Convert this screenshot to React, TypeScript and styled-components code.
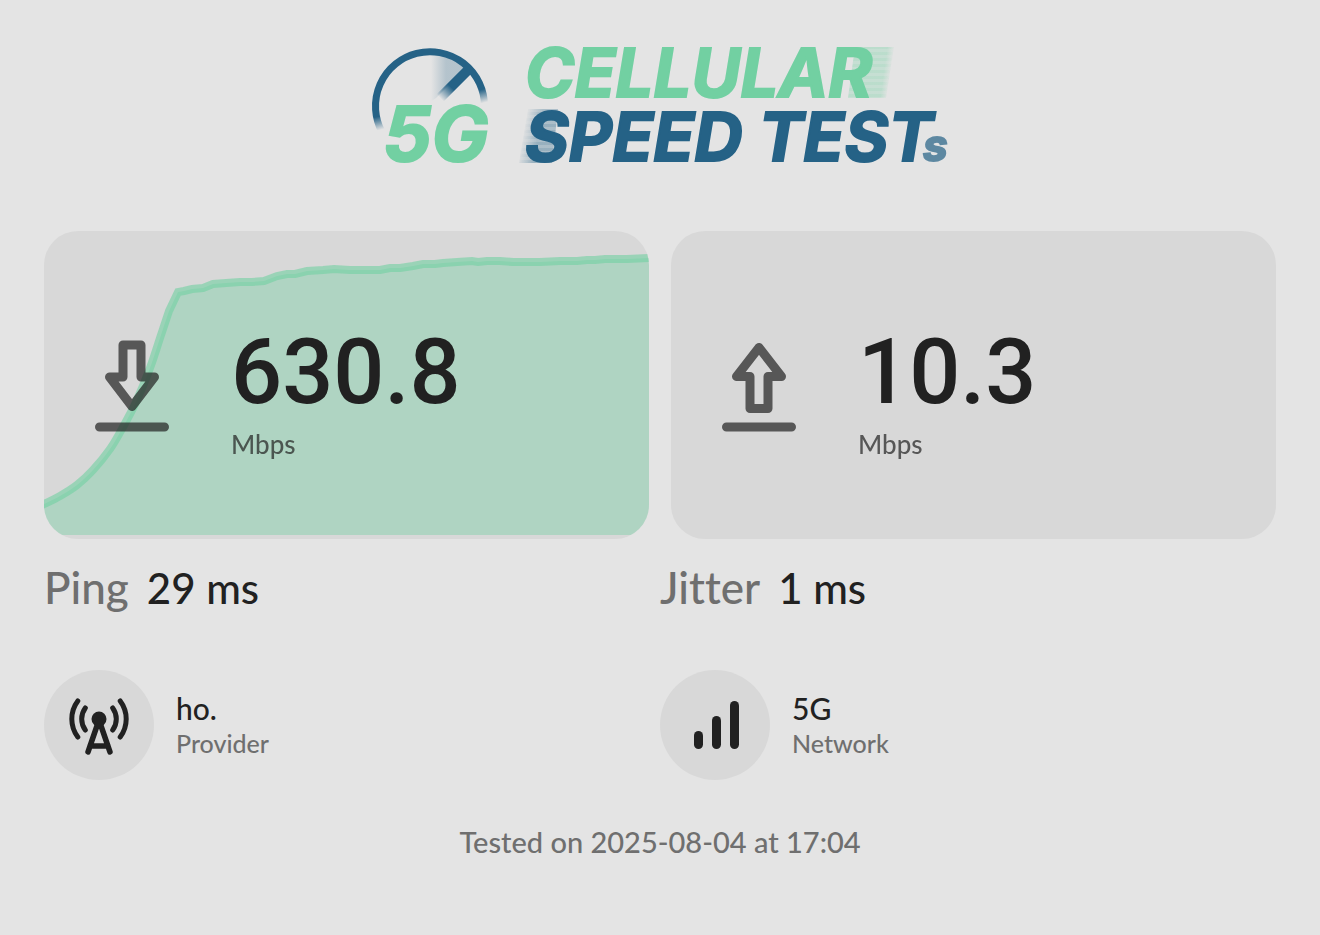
import React from 'react';
import styled, { createGlobalStyle } from 'styled-components';

const ink = '#212121';
const muted = '#6f6f6f';
const green = '#72d0a2';
const blue = '#256286';

const GlobalStyle = createGlobalStyle`
  *, *::before, *::after { box-sizing: border-box; }
  body {
    margin: 0;
    background: #e4e4e4;
    color: ${ink};
    font-family: Lato, 'Liberation Sans', sans-serif;
    font-weight: 500;
    font-variant-ligatures: none;
  }
`;

const Page = styled.main`
  display: flex;
  flex-direction: column;
  padding: 40px 44px 64px;
`;

const Header = styled.header`
  display: flex;
  justify-content: center;
  margin-bottom: 61px;
`;

const LogoSvg = styled.svg`
  display: block;
  width: 580px;
  height: 130px;
  max-width: 100%;
  overflow: visible;
`;

const LogoText = styled.text<{ $color: string }>`
  font-family: Inter, 'Liberation Sans', sans-serif;
  font-weight: 700;
  font-style: italic;
  fill: ${(p) => p.$color};
  stroke: ${(p) => p.$color};
  stroke-width: 2;
`;

const Cards = styled.section`
  display: grid;
  grid-template-columns: 1fr 1fr;
  gap: 22px;
`;

const Card = styled.article`
  position: relative;
  display: flex;
  align-items: center;
  gap: 62px;
  min-height: 308px;
  padding: 2px 51px 0;
  border-radius: 34px;
  background: #d8d8d8;
  overflow: hidden;
`;

const ChartSvg = styled.svg`
  position: absolute;
  inset: 0;
  width: 100%;
  height: 100%;
`;

const DirectionIcon = styled.svg`
  position: relative;
  flex: none;
  width: 74px;
  height: 92px;
  opacity: 0.7;
  fill: none;
  stroke: ${ink};
  stroke-width: 9;
  stroke-linecap: round;
  stroke-linejoin: round;
`;

const Reading = styled.div`
  position: relative;
  display: flex;
  flex-direction: column;
  gap: 10px;
  padding-top: 16px;
`;

const Speed = styled.span`
  font-family: Roboto, 'Liberation Sans', sans-serif;
  font-size: 90px;
  line-height: 90px;
`;

const Unit = styled.span`
  font-size: 26px;
  line-height: 32px;
  opacity: 0.7;
`;

const Columns = styled.section<{ $top: number }>`
  display: grid;
  grid-template-columns: 1fr 1fr;
  margin-top: ${(p) => p.$top}px;
`;

const Metric = styled.p`
  display: flex;
  align-items: baseline;
  gap: 18px;
  margin: 0;
  line-height: 56px;
`;

const MetricName = styled.span`
  color: ${muted};
  font-size: 44px;
`;

const MetricValue = styled.span`
  font-size: 42px;
`;

const Info = styled.div`
  display: flex;
  align-items: center;
  gap: 22px;
`;

const Badge = styled.span`
  display: grid;
  place-items: center;
  flex: none;
  width: 110px;
  height: 110px;
  border-radius: 50%;
  background: #d8d8d8;
`;

const BadgeIcon = styled.svg`
  width: 60px;
  height: 60px;
`;

const InfoText = styled.div`
  display: flex;
  flex-direction: column;
`;

const InfoValue = styled.span`
  font-size: 30px;
  line-height: 36px;
`;

const InfoLabel = styled.span`
  color: ${muted};
  font-size: 25px;
  line-height: 34px;
`;

const Tested = styled.footer`
  margin-top: 44px;
  color: ${muted};
  font-size: 29px;
  line-height: 36px;
  text-align: center;
`;

type Point = [number, number];

const rampUp: Point[] = [
  [0, 273], [16, 265], [33, 254], [49, 239], [66, 218], [79, 196], [92, 171],
  [106, 137], [117, 104], [125, 80],
];

const plateau: Point[] = [
  [134, 61], [140, 60], [148, 58], [159, 57], [169, 53], [182, 52], [196, 51],
  [208, 51], [220, 50], [233, 45], [243, 43], [251, 43], [263, 40], [279, 39],
  [290, 38], [306, 39], [336, 39], [346, 37], [356, 37], [369, 35], [379, 33],
  [391, 33], [399, 32], [413, 31], [428, 30], [434, 31], [443, 30], [456, 30],
  [469, 31], [496, 31], [516, 30], [533, 30], [543, 29], [551, 29], [561, 28],
  [583, 28], [605, 27],
];

function smooth(points: Point[]) {
  return points
    .slice(1)
    .map(([x, y], i) => {
      const before = points[Math.max(i - 1, 0)];
      const from = points[i];
      const after = points[Math.min(i + 2, points.length - 1)];
      const c1 = [from[0] + (x - before[0]) / 6, from[1] + (y - before[1]) / 6];
      const c2 = [x - (after[0] - from[0]) / 6, y - (after[1] - from[1]) / 6];
      return `C${c1} ${c2} ${x},${y}`;
    })
    .join(' ');
}

function SpeedChart() {
  const line = `${rampUp[0]} ${smooth(rampUp)} L${plateau.join(' L')}`;
  return (
    <ChartSvg viewBox="0 0 605 308" preserveAspectRatio="none" aria-hidden="true">
      <path d={`M${line} L605,304 L0,304 Z`} fill={green} fillOpacity={0.4} />
      <path d={`M-10,278 L${line} L615,26`} fill="none" stroke={green} strokeOpacity={0.6} strokeWidth={8} />
    </ChartSvg>
  );
}

function Logo() {
  return (
    <LogoSvg viewBox="0 0 580 130" role="img" aria-label="5G Cellular Speed Tests">
      <defs>
        <linearGradient id="ring" gradientUnits="userSpaceOnUse" x1="60" y1="63" x2="63.4" y2="76">
          <stop offset="0" stopColor={blue} />
          <stop offset="1" stopColor={blue} stopOpacity="0" />
        </linearGradient>
        <linearGradient id="needle" gradientUnits="userSpaceOnUse" x1="81" y1="47" x2="70" y2="58">
          <stop offset="0" stopColor={blue} />
          <stop offset="1" stopColor={blue} stopOpacity="0" />
        </linearGradient>
        <linearGradient id="sweep" gradientUnits="userSpaceOnUse" x1="61" y1="0" x2="76" y2="0">
          <stop offset="0" stopColor={blue} stopOpacity="0" />
          <stop offset="1" stopColor={blue} stopOpacity="0.25" />
        </linearGradient>
        <linearGradient id="trailRight" gradientUnits="userSpaceOnUse" x1="514" y1="30" x2="521" y2="31">
          <stop offset="0" stopColor={green} stopOpacity="0.36" />
          <stop offset="1" stopColor={green} stopOpacity="0.04" />
        </linearGradient>
        <linearGradient id="trailLeft" gradientUnits="userSpaceOnUse" x1="152" y1="95" x2="168" y2="98">
          <stop offset="0" stopColor={blue} stopOpacity="0" />
          <stop offset="1" stopColor={blue} stopOpacity="0.4" />
        </linearGradient>
        <pattern id="lines" width="6" height="6" patternUnits="userSpaceOnUse">
          <rect width="6" height="6" fill="#bbb" />
          <rect width="6" height="3" fill="#fff" />
        </pattern>
        <mask id="stripes" maskUnits="userSpaceOnUse" x="0" y="0" width="580" height="130">
          <rect width="580" height="130" fill="url(#lines)" />
        </mask>
      </defs>

      <path d="M60,14 A52,52 0 0 1 97,27 L66,58 L60,62 Z" fill="url(#sweep)" />
      <path d="M98,30 L67,61" stroke="url(#needle)" strokeWidth="10" fill="none" />
      <path d="M12,92 A54.5,54.5 0 1 1 114.5,66" stroke="url(#ring)" strokeWidth="7" fill="none" />

      <g mask="url(#stripes)">
        <path d="M485,7 L524,7 L516,58 L478,58 Z" fill="url(#trailRight)" />
        <path d="M158,69 L188,69 L182,123 L149,123 Z" fill="url(#trailLeft)" />
      </g>

      <LogoText x="13" y="121" fontSize="76" $color={green}>5G</LogoText>
      <LogoText x="155" y="57" fontSize="67" $color={green}>CELLULAR</LogoText>
      <LogoText x="155" y="121" fontSize="67" $color={blue}>SPEED TEST</LogoText>
      <LogoText x="553" y="121" fontSize="44" $color={blue} opacity="0.7">s</LogoText>
    </LogoSvg>
  );
}

export default function App() {
  return (
    <>
      <GlobalStyle />
      <Page>
        <Header>
          <Logo />
        </Header>

        <Cards>
          <Card>
            <SpeedChart />
            <DirectionIcon viewBox="0 0 74 92" role="img" aria-label="Download">
              <path d="M28,5 H46 V37 H59.5 L37,66.5 L14.5,37 H28 Z M4.5,87 H69.5" />
            </DirectionIcon>
            <Reading>
              <Speed>630.8</Speed>
              <Unit>Mbps</Unit>
            </Reading>
          </Card>
          <Card>
            <DirectionIcon viewBox="0 0 74 92" role="img" aria-label="Upload">
              <path d="M28,68.5 H46 V36.5 H59.5 L37,7.5 L14.5,36.5 H28 Z M4.5,87 H69.5" />
            </DirectionIcon>
            <Reading>
              <Speed>10.3</Speed>
              <Unit>Mbps</Unit>
            </Reading>
          </Card>
        </Cards>

        <Columns $top={20}>
          <Metric>
            <MetricName>Ping</MetricName>
            <MetricValue>29 ms</MetricValue>
          </Metric>
          <Metric>
            <MetricName>Jitter</MetricName>
            <MetricValue>1 ms</MetricValue>
          </Metric>
        </Columns>

        <Columns $top={54}>
          <Info>
            <Badge>
              <BadgeIcon viewBox="0 0 60 60" aria-hidden="true">
                <circle cx="30" cy="24" r="7.5" fill={ink} />
                <g fill="none" stroke={ink} strokeLinecap="round" strokeLinejoin="round">
                  <path d="M19,57 L30,25 L41,57 M21,51 H39" strokeWidth="5.5" />
                  <path
                    d="M16.3,13 A18.6,18.6 0 0 0 16.3,35 M43.7,13 A18.6,18.6 0 0 1 43.7,35 M8.8,6 A30,30 0 0 0 8.8,42 M51.2,6 A30,30 0 0 1 51.2,42"
                    strokeWidth="5"
                  />
                </g>
              </BadgeIcon>
            </Badge>
            <InfoText>
              <InfoValue>ho.</InfoValue>
              <InfoLabel>Provider</InfoLabel>
            </InfoText>
          </Info>
          <Info>
            <Badge>
              <BadgeIcon viewBox="0 0 60 60" aria-hidden="true">
                <g fill={ink}>
                  <rect x="9" y="36" width="9" height="18" rx="4.5" />
                  <rect x="27" y="21" width="9" height="33" rx="4.5" />
                  <rect x="45" y="6" width="9" height="48" rx="4.5" />
                </g>
              </BadgeIcon>
            </Badge>
            <InfoText>
              <InfoValue>5G</InfoValue>
              <InfoLabel>Network</InfoLabel>
            </InfoText>
          </Info>
        </Columns>

        <Tested>Tested on 2025-08-04 at 17:04</Tested>
      </Page>
    </>
  );
}
